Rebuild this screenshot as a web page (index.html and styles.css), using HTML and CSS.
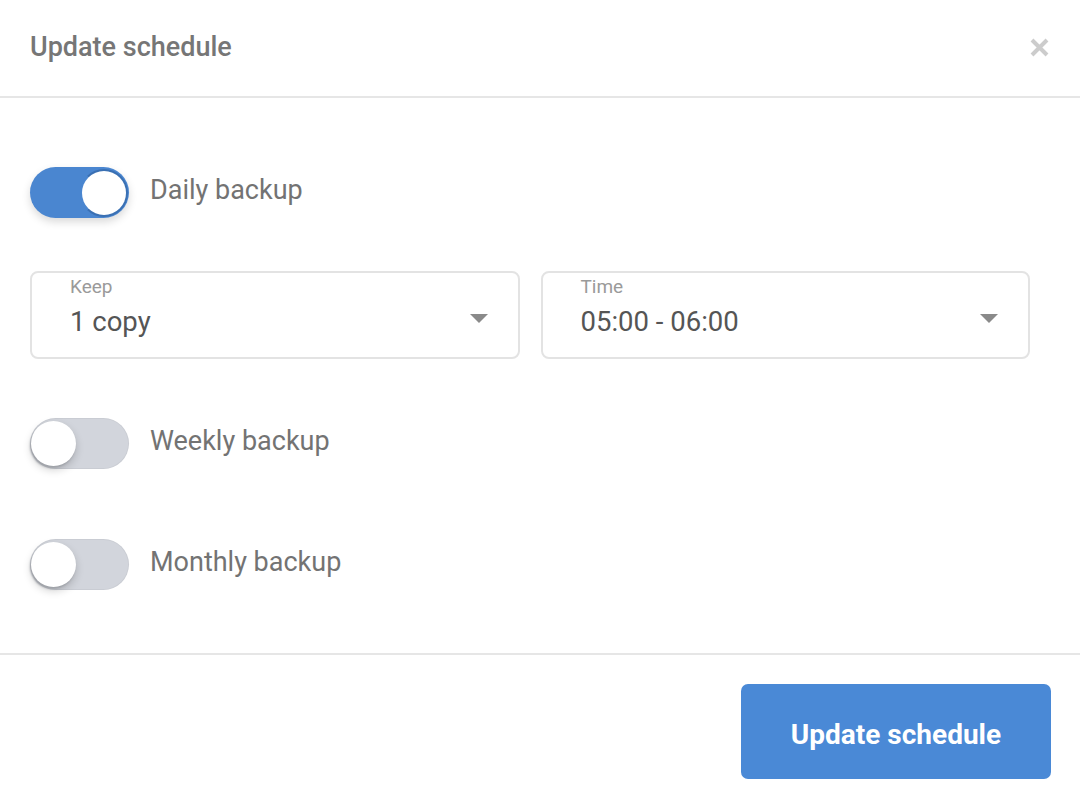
FILE: index.html
```html
<!DOCTYPE html>
<html>

<head>
    <meta charset="UTF-8">
    <title>Update schedule</title>
    <link rel="stylesheet" href="styles.css">
</head>

<body>
    <div class="modal">
        <div class="modal-header">
            <h1>Update schedule</h1>
            <button class="close-button" title="Close">
                <svg width="19" height="19" viewBox="0 0 19 19">
                    <path d="M2 2 L17 17 M17 2 L2 17" stroke="#cccccc" stroke-width="4" stroke-linecap="butt" />
                </svg>
            </button>
        </div>

        <div class="modal-body">
            <div class="toggle-row">
                <span class="toggle on"><span class="knob"></span></span>
                <span class="toggle-label">Daily backup</span>
            </div>

            <div class="select-row">
                <div class="select-box">
                    <div class="select-label">Keep</div>
                    <div class="select-value">1 copy</div>
                    <span class="select-arrow"></span>
                </div>
                <div class="select-box">
                    <div class="select-label">Time</div>
                    <div class="select-value">05:00 - 06:00</div>
                    <span class="select-arrow"></span>
                </div>
            </div>

            <div class="toggle-row weekly">
                <span class="toggle"><span class="knob"></span></span>
                <span class="toggle-label">Weekly backup</span>
            </div>

            <div class="toggle-row monthly">
                <span class="toggle"><span class="knob"></span></span>
                <span class="toggle-label">Monthly backup</span>
            </div>
        </div>

        <div class="modal-footer">
            <button class="primary-button">Update schedule</button>
        </div>
    </div>
</body>

</html>
```

FILE: styles.css
```css
body {
    margin: 0;
    font-family: Roboto, "Liberation Sans", Arial, sans-serif;
    background: #ffffff;
    color: #757575;
}

.modal {
    width: 1080px;
    height: 808px;
    background: white;
}

.modal-header {
    display: flex;
    justify-content: space-between;
    align-items: center;
    height: 98px;
    padding: 0 31px 2px 30px;
    box-sizing: border-box;
    border-bottom: 2px solid #e6e6e6;
}

.modal-header h1 {
    margin: 0;
    font-size: 27px;
    font-weight: 500;
    color: #767676;
}

.close-button {
    display: flex;
    padding: 0;
    border: none;
    background: none;
    cursor: pointer;
}

.modal-body {
    padding: 69px 50px 63px 30px;
}

.toggle-row {
    display: flex;
    align-items: center;
    gap: 21px;
    height: 51px;
}

.toggle {
    position: relative;
    width: 99px;
    height: 51px;
    border-radius: 26px;
    background: #d2d5dc;
    box-shadow: inset 0 0 0 1px rgba(0, 0, 0, 0.04);
}

.toggle .knob {
    position: absolute;
    top: 3px;
    left: 1px;
    width: 45px;
    height: 45px;
    border-radius: 50%;
    background: white;
    box-shadow: -1px 2px 2px #9fa2a8, 0 4px 8px rgba(0, 0, 0, 0.18);
}

.toggle.on {
    background: #4a86d0;
    box-shadow: 0 4px 8px rgba(0, 0, 0, 0.15);
}

.toggle.on .knob {
    left: auto;
    right: 1px;
    top: 2px;
    width: 44px;
    height: 44px;
    border: 2px solid #3a70b3;
    border-left-color: #4a86d0;
    box-shadow: none;
}

.toggle-label {
    padding-bottom: 5px;
    font-size: 27px;
    color: #737373;
}

.select-row {
    display: flex;
    gap: 21px;
    margin-top: 53px;
}

.select-box {
    position: relative;
    width: 448px;
    height: 84px;
    padding: 0 0 0 38px;
    border: 2px solid #e3e3e3;
    border-radius: 8px;
}

.select-label {
    margin-top: 2px;
    font-size: 19px;
    color: #9a9a9a;
}

.select-value {
    margin-top: 7px;
    font-size: 27.5px;
    color: #555555;
}

.select-arrow {
    position: absolute;
    right: 30px;
    top: 41px;
    width: 0;
    height: 0;
    border-left: 9px solid transparent;
    border-right: 9px solid transparent;
    border-top: 9px solid #8a8a8a;
}

.weekly {
    margin-top: 59px;
}

.monthly {
    margin-top: 70px;
}

.modal-footer {
    display: flex;
    justify-content: flex-end;
    padding: 29px 29px 0 0;
    border-top: 2px solid #e6e6e6;
}

.primary-button {
    width: 310px;
    height: 95px;
    padding: 5px 0 0;
    border: none;
    border-radius: 7px;
    background: #4a89d6;
    color: white;
    font-family: Roboto, "Liberation Sans", Arial, sans-serif;
    font-size: 28px;
    font-weight: 700;
    cursor: pointer;
}
```
